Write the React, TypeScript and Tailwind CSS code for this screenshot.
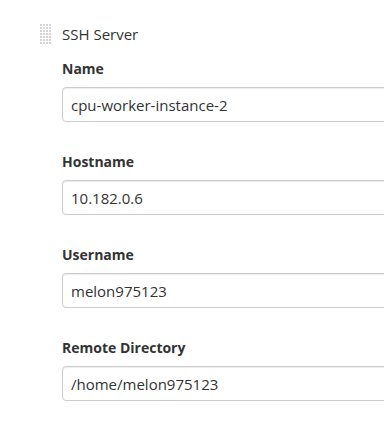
import React from 'react';

const fields = [
  { label: 'Name', value: 'cpu-worker-instance-2' },
  { label: 'Hostname', value: '10.182.0.6' },
  { label: 'Username', value: 'melon975123' },
  { label: 'Remote Directory', value: '/home/melon975123' },
];

const DragHandle: React.FC = () => {
  const dots = [];
  for (let r = 0; r < 7; r++) {
    for (let c = 0; c < 4; c++) {
      dots.push(<rect key={`${r}-${c}`} x={c * 3} y={r * 3} width={2} height={2} fill="#d4d4d4" />);
    }
  }
  return (
    <svg width="12" height="22" viewBox="0 0 12 22">
      {dots}
    </svg>
  );
};

const App: React.FC = () => {
  return (
    <div className="w-[384px] h-[446px] overflow-hidden bg-white text-[#333] font-['Open_Sans','Noto_Sans',sans-serif]">
      <div className="flex pt-[24px] pl-[40px]">
        {/* Drag handle */}
        <div className="w-[22px] shrink-0">
          <DragHandle />
        </div>

        <div className="flex-1">
          <div className="text-[15px] leading-[20px]">SSH Server</div>

          <div className="mt-[15px] flex flex-col gap-[30px]">
            {fields.map((f) => (
              <div key={f.label}>
                <label className="block text-[14px] leading-[20px] font-bold">{f.label}</label>
                <input
                  readOnly
                  value={f.value}
                  className="mt-[8px] w-[360px] h-[35px] px-[8px] text-[15px] text-[#333] border border-[#ccc] rounded-[4px] shadow-[inset_0_1px_1px_rgba(0,0,0,0.075)] outline-none"
                />
              </div>
            ))}
          </div>
        </div>
      </div>
    </div>
  );
};

export default App;
